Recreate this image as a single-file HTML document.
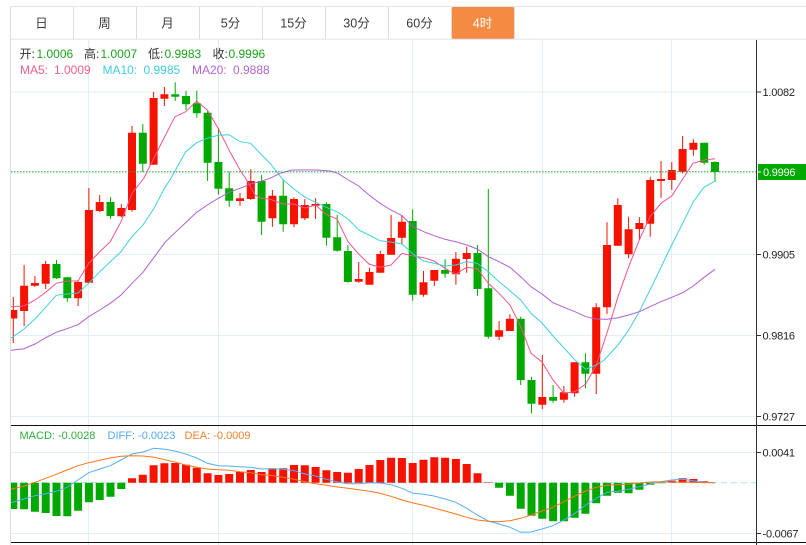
<!DOCTYPE html>
<html><head><meta charset="utf-8"><title>K</title>
<style>
html,body{margin:0;padding:0;background:#fff;width:806px;height:545px;overflow:hidden}
svg{display:block}
text{font-family:"Liberation Sans","Noto Sans CJK SC",sans-serif;font-size:12px}
</style></head><body>
<svg width="806" height="545" viewBox="0 0 806 545" xmlns="http://www.w3.org/2000/svg">
<defs><clipPath id="c"><rect x="11" y="40" width="745.5" height="505"/></clipPath></defs>
<!-- tabs -->
<rect x="452" y="7" width="62" height="32" rx="1.5" fill="#f58b43"/>
<path d="M10.5 6.5H806M10.5 39.3H806" stroke="#e2e4e6" stroke-width="1" fill="none"/>
<path d="M10.5 6.5V545M73.5 6.5V39M136.5 6.5V39M199.5 6.5V39M262.5 6.5V39M325.5 6.5V39M388.5 6.5V39M451.5 6.5V39M514.5 6.5V39" stroke="#dcdcdc" fill="none"/>
<g text-anchor="middle" fill="#3a3a3a" style="font-size:12.5px">
<text x="41.5" y="27.5" style="font-size:12.5px">日</text>
<text x="104.5" y="27.5" style="font-size:12.5px">周</text>
<text x="167.5" y="27.5" style="font-size:12.5px">月</text>
<text x="230.5" y="27.5" style="font-size:12.5px">5分</text>
<text x="293.5" y="27.5" style="font-size:12.5px">15分</text>
<text x="356.5" y="27.5" style="font-size:12.5px">30分</text>
<text x="419.5" y="27.5" style="font-size:12.5px">60分</text>
<text x="482.5" y="27.5" fill="#fff" style="font-size:12.5px">4时</text>
</g>
<!-- grid -->
<path d="M11 92H756M11 173H756M11 254.5H756M11 335.5H756M11 416.5H756M11 452.5H756M11 533.5H756M88.5 40V545M218.5 40V545M412.5 40V545M542.5 40V545M671.5 40V545" stroke="#e3edf3" fill="none"/>
<!-- macd dashed zero -->
<path d="M11 482.7H756" stroke="#a8e2f0" stroke-dasharray="6 4" fill="none"/>
<g clip-path="url(#c)">
<!-- macd bars -->
<path fill="#f51300" d="M128 478.3h8V482.7h-8zM138.8 474.7h8V482.7h-8zM149.6 465.3h8V482.7h-8zM160.4 463.3h8V482.7h-8zM171.2 463h8V482.7h-8zM182 464.7h8V482.7h-8zM192.8 467.7h8V482.7h-8zM203.6 473.3h8V482.7h-8zM214.4 475h8V482.7h-8zM225.2 474h8V482.7h-8zM236 472h8V482.7h-8zM246.8 470h8V482.7h-8zM257.6 472h8V482.7h-8zM268.4 468.3h8V482.7h-8zM279.2 468.3h8V482.7h-8zM290 465h8V482.7h-8zM300.8 465.3h8V482.7h-8zM311.6 467h8V482.7h-8zM322.4 470.3h8V482.7h-8zM333.2 472h8V482.7h-8zM343.9 472.7h8V482.7h-8zM354.7 469h8V482.7h-8zM365.5 465h8V482.7h-8zM376.3 460h8V482.7h-8zM387.1 457.7h8V482.7h-8zM397.9 458h8V482.7h-8zM408.7 463h8V482.7h-8zM419.5 459.7h8V482.7h-8zM430.3 457.3h8V482.7h-8zM441.1 457.7h8V482.7h-8zM451.9 459h8V482.7h-8zM462.7 464h8V482.7h-8zM473.5 473.3h8V482.7h-8zM484.3 482.2h8V482.7h-8zM667.8 480.7h8V482.7h-8zM678.6 478.3h8V482.7h-8zM689.4 479h8V482.7h-8zM700.2 481.3h8V482.7h-8z"/>
<path fill="#00a800" d="M9.3 482.7h8V509h-8zM20.1 482.7h8V509.3h-8zM30.9 482.7h8V511.7h-8zM41.7 482.7h8V513h-8zM52.5 482.7h8V516h-8zM63.3 482.7h8V516.3h-8zM74.1 482.7h8V510.7h-8zM84.9 482.7h8V502.3h-8zM95.7 482.7h8V500h-8zM106.5 482.7h8V496.7h-8zM117.3 482.7h8V489h-8zM495.1 482.7h8V487.7h-8zM505.9 482.7h8V495.7h-8zM516.7 482.7h8V508.7h-8zM527.5 482.7h8V515.7h-8zM538.3 482.7h8V518.7h-8zM549.1 482.7h8V521.3h-8zM559.9 482.7h8V521.3h-8zM570.6 482.7h8V517.7h-8zM581.4 482.7h8V513.7h-8zM592.2 482.7h8V503.3h-8zM603 482.7h8V495.7h-8zM613.8 482.7h8V492.7h-8zM624.6 482.7h8V493.3h-8zM635.4 482.7h8V489.7h-8zM646.2 482.7h8V484.7h-8zM657 482.7h8V483.2h-8z"/>
<!-- macd lines -->
<polyline fill="none" stroke="#55adf5" stroke-width="1" points="10.7,502.7 24,499 35,495.7 45.7,493.7 56.3,491.3 67,487.3 78,480 88.7,472.7 99.7,469 110.3,465.7 121,460 132,454 143,452 154,448.3 165,449.3 176,451.3 186.7,454.3 196.7,458 207.3,463.3 218.3,465.7 229.3,466 240,466.7 250.7,467.3 261.7,469 270,468.7 283,469.3 294,470.7 305,474 315.7,476 326.3,479.3 337.3,482 348,483.7 358.7,483.7 369.3,482.7 380,483 391,484.7 402,488.3 413,493.3 423.7,494.3 434,496 445,499 455.7,502.3 466.7,508.3 477.3,515 488.3,521 499,524 510,527.3 520.7,532.3 531,532 542,529 553,525.7 564,520 575,513.3 585.7,505 596.3,498.3 607,492.3 618,491.3 628.7,489.3 639.3,486.7 650,484 661,481.7 671.7,480 682.7,479.3 693,480.7 704,482.3 715,482.7"/>
<polyline fill="none" stroke="#f9761b" stroke-width="1" points="10.7,489.3 24,486 35,482.3 45.7,478.3 56.3,474.3 67,470 78,465.7 88.7,462.7 99.7,460.3 110.3,458 121,456.3 132,455.7 143,456 154,457.3 165,459.7 176,462.3 186.7,465.3 196.7,467.3 207.3,469 218.3,469.7 229.3,470.3 240,471.7 250.7,472.7 261.7,474.7 270,475.3 283,477.3 294,479.3 305,481.7 315.7,483.7 326.3,485.3 337.3,487 348,488.3 358.7,489.7 369.3,491.3 380,493.3 391,496.3 402,500 413,503 423.7,505.3 434,508 445,511 455.7,514 466.7,517.3 477.3,520 488.3,521.3 499,521.7 510,520.7 520.7,518.3 531,515 542,511 553,507.3 564,501.7 575,496 585.7,491 596.3,487.3 607,485.3 618,484.7 628.7,484 639.3,483 650,482 661,481.7 671.7,482 682.7,482.3 693,482.3 704,482.7 715,482.7"/>
<!-- wicks -->
<path fill="none" stroke="#f51300" d="M13.3 297V343M24.1 265V326M34.9 276V287M45.7 261V289M78.1 280V306M88.9 188V282.7M99.7 195V212M121.3 204V217.3M132 126V211.7M153.6 91.7V164.7M164.4 87V106M240 193V205.7M250.8 169.3V199.7M272.4 190V226.7M294 197.3V227.3M304.8 199V220M315.6 198.3V219M358.7 262V282.7M369.5 267.7V284.7M380.3 251V272.7M391.1 215V254.7M401.9 215V244M423.5 271V296.7M434.3 270V286M455.9 252V284.7M466.7 246.7V272.7M499.1 321V340.3M509.9 314.3V331M542.3 355V409M563.9 386V402.7M574.6 362V396.7M596.2 303.3V394M607 222.3V314M617.8 198.3V245.7M628.6 216.7V258.3M639.4 217.3V240M650.2 176.7V236.7M661 161V197.7M671.8 162V190M682.6 136V173.3M693.4 139.3V155.7"/>
<path fill="none" stroke="#00a800" d="M56.5 260V279M67.3 276.7V301.7M110.5 197V219M142.8 124V172M175.2 82.3V101M186 90.7V110M196.8 90.7V117.7M207.6 111V181M218.4 128.3V194.7M229.2 171.7V206.7M261.6 175V235M283.2 180V231.7M326.4 202.3V245.7M337.2 215V251.7M347.9 245V282.7M412.7 209.3V300.7M445.1 259.3V277.7M477.5 245V295.7M488.3 189V338.7M520.7 316.7V385M531.5 376.7V413.3M553.1 385V402.7M585.4 353.3V388.3M704.2 142.7V164.7M715 161.3V181.7"/>
<!-- bodies -->
<path fill="#f51300" d="M9.3 310h8V318.5h-8zM20.1 285.7h8V311h-8zM30.9 283h8V285.7h-8zM41.7 264h8V283.7h-8zM74.1 282h8V298.3h-8zM84.9 210h8V282.7h-8zM95.7 202h8V211h-8zM117.3 208h8V216.3h-8zM128 132.7h8V210h-8zM149.6 98h8V164.7h-8zM160.4 94.3h8V98.7h-8zM236 198.3h8V201h-8zM246.8 181h8V199h-8zM268.4 195.7h8V218.3h-8zM290 199h8V224.3h-8zM300.8 205h8V218.3h-8zM311.6 204h8V205.7h-8zM354.7 279h8V281.7h-8zM365.5 272h8V284.7h-8zM376.3 254h8V272.7h-8zM387.1 238h8V254.7h-8zM397.9 221.7h8V237.7h-8zM419.5 282.3h8V294.7h-8zM430.3 270h8V280.7h-8zM451.9 258.7h8V274.3h-8zM462.7 253h8V259h-8zM495.1 330.3h8V336.7h-8zM505.9 318.7h8V331h-8zM538.3 397h8V404.7h-8zM559.9 392.3h8V399.7h-8zM570.6 362.3h8V393.3h-8zM592.2 307.3h8V373.7h-8zM603 245h8V307.3h-8zM613.8 205h8V245.7h-8zM624.6 229.3h8V254.3h-8zM635.4 223h8V229h-8zM646.2 180h8V223.7h-8zM657 179h8V181h-8zM667.8 170h8V180h-8zM678.6 149h8V171.7h-8zM689.4 142.7h8V149.7h-8z"/>
<path fill="#00a800" d="M52.5 264h8V278.3h-8zM63.3 277.3h8V298.3h-8zM106.5 202h8V216h-8zM138.8 132.7h8V163.7h-8zM171.2 94.3h8V96.7h-8zM182 96h8V104.3h-8zM192.8 103.3h8V113.3h-8zM203.6 112.7h8V162.7h-8zM214.4 162h8V188.7h-8zM225.2 188.3h8V200.7h-8zM257.6 181h8V221.7h-8zM279.2 195.7h8V224.3h-8zM322.4 204h8V237.7h-8zM333.2 237.3h8V250.7h-8zM343.9 251h8V282h-8zM408.7 221h8V294.7h-8zM441.1 270h8V273.7h-8zM473.5 253h8V289h-8zM484.3 288.3h8V336.7h-8zM516.7 318.7h8V380h-8zM527.5 380h8V403.7h-8zM549.1 397h8V400.7h-8zM581.4 362.3h8V373.7h-8zM700.2 142.7h8V162.7h-8zM711 162h8V172h-8z"/>
<!-- MA lines -->
<polyline fill="none" stroke="#f0558a" stroke-width="1" points="10.7,306.7 24,306 35,300 45.7,292.3 56.3,283.3 67,281 78,281 88.7,263.3 99.7,251.7 110.3,241.7 121,221.7 132,193.3 144,178 154,158 165,136 175,116.7 185.7,111.7 196.7,101 207.3,110 218,128 229,150 240,170 246.7,180 255,195 261.7,198.3 270,199.3 283,204 294,204 305,208 315.7,205 326,214.3 337,219 348,241.7 358.7,254 369,264 380,267.3 391,265 402,253.3 413,256 423.7,257.7 434,261 445,268.3 455.7,274.3 466.7,267.3 477.3,268.7 488.3,283.3 499,293.3 510,305 520.7,326.7 531,353.3 542,362 553,380 564,393.3 575,391.7 585.7,384 596.3,365 607,333 618,296.7 628.7,266.7 639.3,240 650,216.7 661,203.3 671.7,196 682.7,179 693,163.3 704,160 715,158.7"/>
<polyline fill="none" stroke="#3fcfe2" stroke-width="1" points="10.7,338.3 24,329 35,319 45.7,307.3 56.3,295.3 67,294 78,293 88.7,283.3 99.7,271.7 110.3,261.7 121,251.7 132,236.7 143,225 154,208.3 165,187.3 170,180 185.7,151.7 196.7,142.7 207,138.3 218,135.3 229,134.7 240,141.7 250.7,143.3 261.7,155 270,163.3 283.3,180 294,189 305,197.3 315.7,202.3 326.3,207.3 337,211.7 348,219 358.7,230 369,235 380,240.7 391,242 402,244 413,254 423.7,261 434,263.3 445,266 455.7,265 466.7,261.7 477.3,263.3 488.3,271.7 499,281.7 510,290.7 520.7,300 531,313.3 542,323 553,336 564,348 575,360 585.7,369.3 596.3,365 604.3,360 618,345 628.7,330 639.3,311.7 650,290 661,267.3 671.7,245 682.7,223.3 693.3,201.7 704,187.3 715,181"/>
<polyline fill="none" stroke="#b25fcf" stroke-width="1" points="10.7,350.3 24,348.7 35,344 45.7,337.7 56.3,332.3 67,328.7 78,324.7 88.7,316.7 99.7,310 110.3,303.3 121,295 132,283.3 143,272.3 154,257.3 165,242.3 176,231.7 186.7,221.7 196.7,212.3 207.3,205 218.3,198.3 229.3,192.3 240,188.3 250.7,184 261.7,181 270,178.3 280,173.3 291.7,170 303,170 316.7,170 330,171 338,173.3 346.7,179 358.7,186 369,195 380,203.3 391,210 402,215.7 413,226.7 423.7,231.7 434,235.7 445,239.3 455.7,241.7 466.7,245 477.3,249 488.3,256.7 499,261.7 510,267.3 520.7,276.7 531,286.7 542,294 553,302.7 564,307.3 575,311.7 585.7,316.7 596.3,319 607,319.3 618,317.7 628.7,315 639.3,311.7 650,306.7 661,301.7 671.7,297.3 682.7,292.7 693.3,286 704,277.3 715,269.3"/>
</g>
<!-- last price -->
<path d="M11 171.7H757" stroke="#2fa52f" stroke-dasharray="1.5 1.5" fill="none"/>
<!-- axes -->
<path d="M11 425.5H806M11 542.5H806" stroke="#111" fill="none"/>
<path d="M756.5 40V545M757 92H761M757 254.5H761M757 335.5H761M757 416.5H761M757 452.5H761M757 533.5H761" stroke="#333" fill="none"/>
<rect x="758" y="164" width="48" height="16" fill="#00a800"/>
<path d="M757 172H761" stroke="#fff"/>
<g fill="#222">
<text x="762.5" y="96" style="font-size:11px" textLength="32.5">1.0082</text>
<text x="762.5" y="258.5" style="font-size:11px" textLength="32.5">0.9905</text>
<text x="762.5" y="339.5" style="font-size:11px" textLength="32.5">0.9816</text>
<text x="762.5" y="420.5" style="font-size:11px" textLength="32.5">0.9727</text>
<text x="762.5" y="456.5" style="font-size:11px" textLength="32.5">0.0041</text>
<text x="762.5" y="537.5" style="font-size:11px" textLength="36">-0.0067</text>
</g>
<text x="763" y="176" fill="#fff" style="font-size:11px" textLength="32.5">0.9996</text>
<!-- legends -->
<g fill="#333">
<text x="19.5" y="58">开:</text><text x="84" y="58">高:</text><text x="148" y="58">低:</text><text x="212.5" y="58">收:</text>
</g>
<g fill="#1aa51a">
<text x="36.5" y="58">1.0006</text><text x="100.5" y="58">1.0007</text><text x="164.5" y="58">0.9983</text><text x="228.5" y="58">0.9996</text>
</g>
<g fill="#ee5f8d"><text x="20" y="74">MA5:</text><text x="54" y="74">1.0009</text></g>
<g fill="#3fcbe0"><text x="102.5" y="74">MA10:</text><text x="143.5" y="74">0.9985</text></g>
<g fill="#b264cc"><text x="192" y="74">MA20:</text><text x="233" y="74">0.9888</text></g>
<text x="19.5" y="439" fill="#2fae3a" style="font-size:11px">MACD: -0.0028</text>
<text x="107.5" y="439" fill="#55a8ee" style="font-size:11px">DIFF: -0.0023</text>
<text x="184.5" y="439" fill="#f57f2d" style="font-size:11px">DEA: -0.0009</text>
</svg>
</body></html>
